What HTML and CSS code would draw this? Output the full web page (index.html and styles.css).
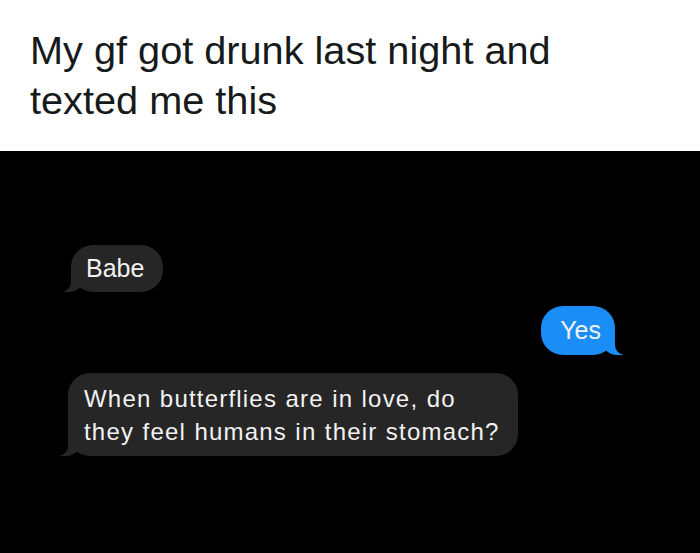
FILE: index.html
```html
<!DOCTYPE html>
<html lang="en">
<head>
<meta charset="utf-8">
<title>My gf got drunk last night and texted me this</title>
<link rel="stylesheet" href="styles.css">
</head>
<body>
  <header class="caption">
    <h1 class="caption-text">My gf got drunk last night and texted me this</h1>
  </header>
  <main class="chat">
    <div class="row row-in row-first">
      <div class="bubble bubble-in bubble-short"><span class="bubble-text">Babe</span></div>
    </div>
    <div class="row row-out">
      <div class="bubble bubble-out"><span class="bubble-text">Yes</span></div>
    </div>
    <div class="row row-in">
      <div class="bubble bubble-in bubble-long"><span class="bubble-text">When butterflies are in love, do<br>they feel humans in their stomach?</span></div>
    </div>
  </main>
</body>
</html>
```
FILE: styles.css
```css
* { box-sizing: border-box; }

html, body {
  margin: 0;
  padding: 0;
  background: #000;
}

body {
  width: 700px;
  height: 553px;
  overflow: hidden;
  display: flex;
  flex-direction: column;
}

.caption {
  background: #fff;
  height: 151px;
  padding: 25px 30px 0 30px;
}

.caption-text {
  margin: 0;
  width: 580px;
  font-family: "Liberation Sans", Arial, sans-serif;
  font-weight: normal;
  font-size: 39.7px;
  line-height: 50px;
  color: #161a1b;
}

.chat {
  flex: 1;
  background: #000;
  display: flex;
  flex-direction: column;
  padding: 0 85px 0 69px;
}

.row {
  display: flex;
}

.row-first { margin-top: 94px; }
.row-out { justify-content: flex-end; margin-top: 14px; }
.row-out + .row-in { margin-top: 18px; }

.bubble {
  position: relative;
  font-family: "Liberation Sans", Arial, sans-serif;
  font-size: 24px;
  line-height: 33px;
  color: #f2f2f2;
  border-radius: 22px;
  padding: 7px 15px;
}

.bubble-text {
  position: relative;
  z-index: 2;
}

.bubble-in { background: #262626; }

.bubble-short {
  font-size: 25px;
  padding: 7px 19px 7px 15px;
  margin-left: 2px;
}

.bubble-out {
  background: #1b8df6;
  font-size: 25px;
  padding: 8px 14px 8px 19px;
}

.bubble-long {
  padding: 9px 18px 8px 16px;
  margin-left: -1px;
  letter-spacing: 1.2px;
  word-spacing: 0.5px;
}

.bubble::before,
.bubble::after {
  content: "";
  position: absolute;
  bottom: 0;
}

.bubble-in::before {
  z-index: 0;
  left: -8px;
  width: 22px;
  height: 22px;
  background: #262626;
  border-bottom-right-radius: 16px;
}

.bubble-in::after {
  z-index: 1;
  left: -12px;
  width: 12px;
  height: 22px;
  background: #000;
  border-bottom-right-radius: 10px;
}

.bubble-out::before {
  z-index: 0;
  right: -8px;
  width: 22px;
  height: 22px;
  background: #1b8df6;
  border-bottom-left-radius: 16px;
}

.bubble-out::after {
  z-index: 1;
  right: -12px;
  width: 12px;
  height: 22px;
  background: #000;
  border-bottom-left-radius: 10px;
}
```
